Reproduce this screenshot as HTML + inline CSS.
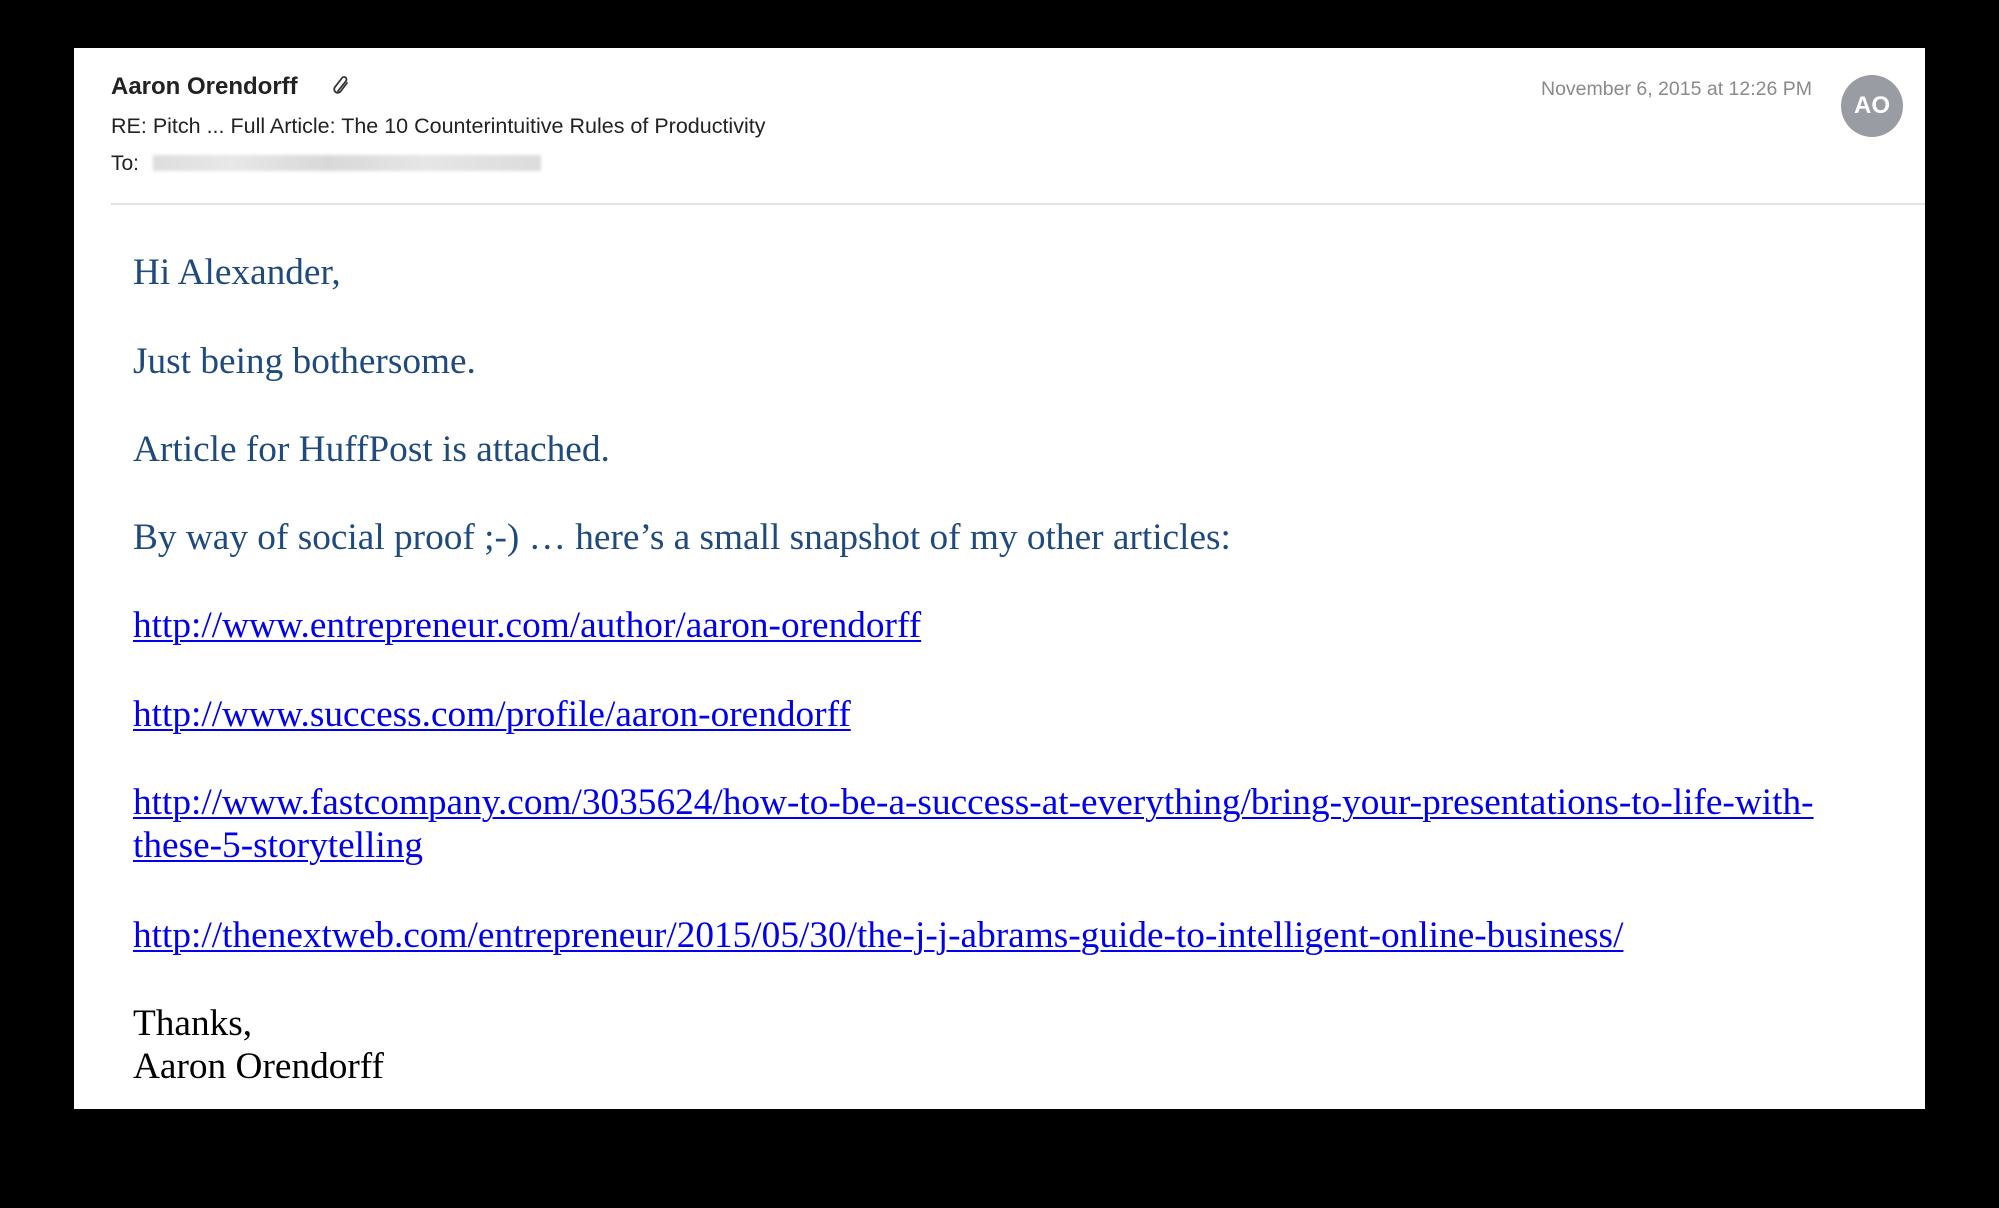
<!DOCTYPE html>
<html><head><meta charset="utf-8"><style>
html,body{margin:0;padding:0;background:#000;width:1999px;height:1208px;overflow:hidden}
#p{position:absolute;left:74px;top:48px;width:1851px;height:1061px;background:#fff}
.s{position:absolute;font-family:"Liberation Sans",sans-serif;white-space:nowrap}
.b{position:absolute;left:133px;font-family:"Liberation Serif",serif;font-size:37.3px;line-height:44px;white-space:nowrap;color:#1f4a7e}
.l{color:#0000ee;text-decoration:underline;text-decoration-thickness:2px;text-underline-offset:3px}
.k{color:#000}
</style></head><body>
<div id="p"></div>
<div class="s" style="left:111px;top:73px;font-size:24px;font-weight:bold;color:#222">Aaron Orendorff</div>
<svg style="position:absolute;left:330px;top:74px" width="22" height="22" viewBox="0 0 22 22"><path d="M8 17 L16 7 a2.5 2.5 0 0 0 -4 -3 L5 13 a3.5 3.5 0 0 0 5.5 4.5 L17 9" fill="none" stroke="#333" stroke-width="1.8" stroke-linecap="round"/></svg>
<div class="s" style="left:111px;top:114px;font-size:21.5px;color:#222">RE: Pitch ... Full Article: The 10 Counterintuitive Rules of Productivity</div>
<div class="s" style="left:111px;top:152px;font-size:21px;color:#222">To:</div>
<div style="position:absolute;left:153px;top:155px;width:388px;height:16px;background:linear-gradient(90deg,#ddd,#e8e8e8 20%,#d8d8d8 45%,#e6e6e6 70%,#dcdcdc);filter:blur(1.5px)"></div>
<div class="s" style="right:187px;top:78px;font-size:19.5px;color:#8a8a8a">November 6, 2015 at 12:26 PM</div>
<div style="position:absolute;left:1841px;top:75px;width:62px;height:62px;border-radius:50%;background:#9a9ca3;color:#fff;font:bold 24px/62px 'Liberation Sans',sans-serif;text-align:center">AO</div>
<div style="position:absolute;left:111px;top:203px;width:1814px;height:2px;background:#e2e2e2"></div>
<div class="b" style="top:251px">Hi Alexander,</div>
<div class="b" style="top:340px">Just being bothersome.</div>
<div class="b" style="top:428px">Article for HuffPost is attached.</div>
<div class="b" style="top:516px">By way of social proof ;-) … here’s a small snapshot of my other articles:</div>
<div class="b l" style="top:604px">http://www.entrepreneur.com/author/aaron-orendorff</div>
<div class="b l" style="top:693px">http://www.success.com/profile/aaron-orendorff</div>
<div class="b l" style="top:781px">http://www.fastcompany.com/3035624/how-to-be-a-success-at-everything/bring-your-presentations-to-life-with-</div>
<div class="b l" style="top:824px">these-5-storytelling</div>
<div class="b l" style="top:914px">http://thenextweb.com/entrepreneur/2015/05/30/the-j-j-abrams-guide-to-intelligent-online-business/</div>
<div class="b k" style="top:1002px">Thanks,</div>
<div class="b k" style="top:1045px">Aaron Orendorff</div>
</body></html>
